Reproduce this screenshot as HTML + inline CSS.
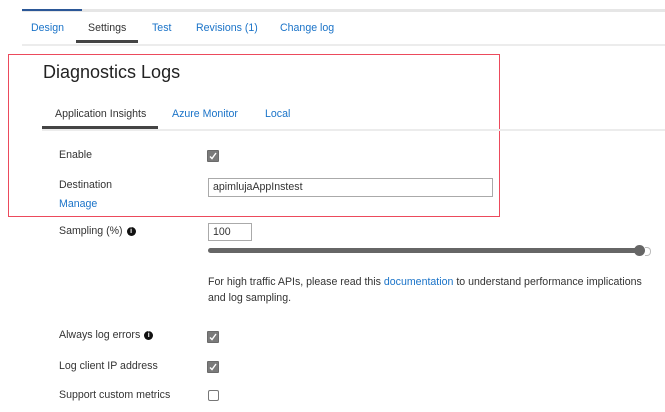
<!DOCTYPE html>
<html><head><style>
body{margin:0;width:665px;height:412px;background:#fff;font-family:"Liberation Sans",sans-serif;font-size:10.6px;color:#333;position:relative;overflow:hidden}
.a{position:absolute;white-space:nowrap}
.l{color:#1a73c8}
.cb{position:absolute;width:10px;height:10px;background:#7a7a7a;border:1px solid #6a6a6a;border-radius:1px}
.cb svg{position:absolute;left:1px;top:1px}
.cu{position:absolute;width:9px;height:9px;border:1px solid #777;border-radius:2px;background:#fff}
.i{display:inline-block;width:9px;height:9px;border-radius:50%;background:#111;color:#fff;font-size:7px;font-weight:bold;text-align:center;line-height:9px;vertical-align:1px;margin-left:4px}
</style></head><body>
<div class="a" style="left:22px;top:9px;width:643px;height:3px;background:#e6e6e6"></div>
<div class="a" style="left:22px;top:9px;width:60px;height:2px;background:#2b5797"></div>
<div class="a l" style="left:31px;top:22px">Design</div>
<div class="a" style="left:88px;top:22px;color:#333">Settings</div>
<div class="a l" style="left:152px;top:22px">Test</div>
<div class="a l" style="left:196px;top:22px">Revisions (1)</div>
<div class="a l" style="left:280px;top:22px">Change log</div>
<div class="a" style="left:76px;top:40px;width:62px;height:3px;background:#444"></div>
<div class="a" style="left:22px;top:44px;width:643px;height:2px;background:#ececec"></div>
<div class="a" style="left:8px;top:54px;width:490px;height:161px;border:1px solid #ec4a5c"></div>
<div class="a" style="left:43px;top:62px;font-size:18px;color:#222">Diagnostics Logs</div>
<div class="a" style="left:55px;top:108px;color:#333">Application Insights</div>
<div class="a l" style="left:172px;top:108px">Azure Monitor</div>
<div class="a l" style="left:265px;top:108px">Local</div>
<div class="a" style="left:42px;top:126px;width:116px;height:3px;background:#444"></div>
<div class="a" style="left:42px;top:129px;width:623px;height:2px;background:#ececec"></div>
<div class="a" style="left:59px;top:149px">Enable</div>
<div class="cb" style="left:207px;top:150px"><svg width="8" height="8" viewBox="0 0 8 8"><path d="M1 4.5 L3 6.5 L7 1" stroke="#fff" stroke-width="1.4" fill="none"/></svg></div>
<div class="a" style="left:59px;top:179px">Destination</div>
<div class="a l" style="left:59px;top:198px">Manage</div>
<div class="a" style="left:208px;top:178px;width:279px;height:17px;border:1px solid #aaa;padding-left:4px;line-height:17px">apimlujaAppInstest</div>
<div class="a" style="left:59px;top:225px">Sampling (%)<span class="i">i</span></div>
<div class="a" style="left:208px;top:223px;width:38px;height:16px;border:1px solid #aaa;padding-left:4px;line-height:17px">100</div>
<div class="a" style="left:208px;top:248px;width:434px;height:5px;background:#666;border-radius:3px"></div>
<div class="a" style="left:634px;top:245px;width:11px;height:11px;background:#666;border-radius:50%"></div>
<div class="a" style="left:645px;top:247px;width:5px;height:7px;border:1px solid #bbb;border-left:none;border-radius:0 4px 4px 0"></div>
<div class="a" style="left:208px;top:274px;line-height:16px">For high traffic APIs, please read this <span class="l">documentation</span> to understand performance implications<br>and log sampling.</div>
<div class="a" style="left:59px;top:329px">Always log errors<span class="i">i</span></div>
<div class="cb" style="left:207px;top:331px"><svg width="8" height="8" viewBox="0 0 8 8"><path d="M1 4.5 L3 6.5 L7 1" stroke="#fff" stroke-width="1.4" fill="none"/></svg></div>
<div class="a" style="left:59px;top:360px">Log client IP address</div>
<div class="cb" style="left:207px;top:361px"><svg width="8" height="8" viewBox="0 0 8 8"><path d="M1 4.5 L3 6.5 L7 1" stroke="#fff" stroke-width="1.4" fill="none"/></svg></div>
<div class="a" style="left:59px;top:389px">Support custom metrics</div>
<div class="cu" style="left:208px;top:390px"></div>
</body></html>
